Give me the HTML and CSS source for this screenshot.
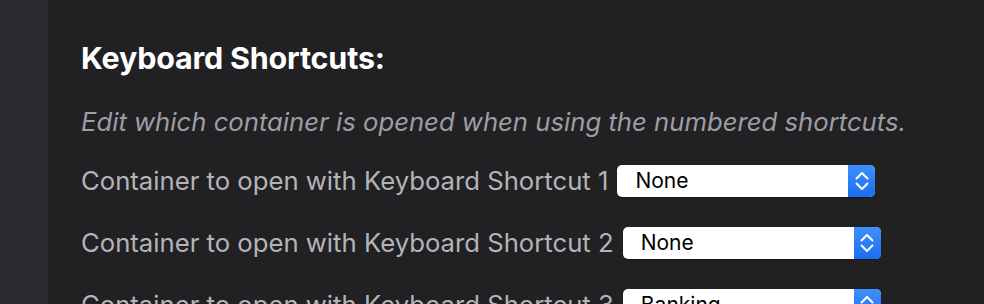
FILE: index.html
```html
<!DOCTYPE html>
<html>
<head>
<meta charset="utf-8">
<link rel="stylesheet" href="styles.css">
</head>
<body>
<div class="sidebar"></div>
<main class="main">
  <h2 class="title">Keyboard Shortcuts:</h2>
  <p class="desc">Edit which container is opened when using the numbered shortcuts.</p>
  <div class="row">
    <span class="label">Container to open with Keyboard Shortcut 1</span>
    <div class="select"><span class="value">None</span><span class="arrows"><svg width="14" height="22" viewBox="0 0 14 22"><path d="M1.5 8.5 L7 3 L12.5 8.5" /><path d="M1.5 13.5 L7 19 L12.5 13.5" /></svg></span></div>
  </div>
  <div class="row">
    <span class="label">Container to open with Keyboard Shortcut 2</span>
    <div class="select"><span class="value">None</span><span class="arrows"><svg width="14" height="22" viewBox="0 0 14 22"><path d="M1.5 8.5 L7 3 L12.5 8.5" /><path d="M1.5 13.5 L7 19 L12.5 13.5" /></svg></span></div>
  </div>
  <div class="row">
    <span class="label">Container to open with Keyboard Shortcut 3</span>
    <div class="select"><span class="value">Banking</span><span class="arrows"><svg width="14" height="22" viewBox="0 0 14 22"><path d="M1.5 8.5 L7 3 L12.5 8.5" /><path d="M1.5 13.5 L7 19 L12.5 13.5" /></svg></span></div>
  </div>
</main>
</body>
</html>
```
FILE: styles.css
```css
html, body {
  margin: 0;
  padding: 0;
  height: 100%;
  overflow: hidden;
}
body {
  display: flex;
  background: #212124;
  font-family: Inter, "Noto Sans", sans-serif;
}
.sidebar {
  width: 48px;
  flex: none;
  background: #2a292e;
}
.main {
  flex: 1;
  padding: 40px 0 0 33px;
}
.title {
  margin: 0;
  font-size: 30.5px;
  font-weight: 700;
  line-height: 36px;
  color: #ffffff;
  letter-spacing: -0.2px;
}
.desc {
  margin: 30px 0 0 0;
  font-size: 25.7px;
  font-style: italic;
  line-height: 32px;
  color: #9d9da2;
}
.row {
  display: flex;
  align-items: center;
  gap: 9px;
  height: 32px;
  margin-top: 27px;
}
.row + .row {
  margin-top: 30px;
}
.label {
  font-size: 25.7px;
  color: #b4b4b8;
  white-space: nowrap;
  position: relative;
  top: -1px;
}
.select {
  display: flex;
  width: 258px;
  height: 32px;
  border-radius: 5px;
  background: #ffffff;
  box-shadow: 0 1px 1px rgba(0,0,0,0.4);
  overflow: hidden;
}
.value {
  flex: 1;
  padding-left: 18px;
  font-size: 21px;
  line-height: 32px;
  color: #000000;
}
.arrows {
  width: 27px;
  display: flex;
  align-items: center;
  justify-content: center;
  background: linear-gradient(#3f90fb, #1a6cf2);
}
.arrows svg path {
  fill: none;
  stroke: #ffffff;
  stroke-width: 2;
  stroke-linecap: round;
  stroke-linejoin: round;
}
```
